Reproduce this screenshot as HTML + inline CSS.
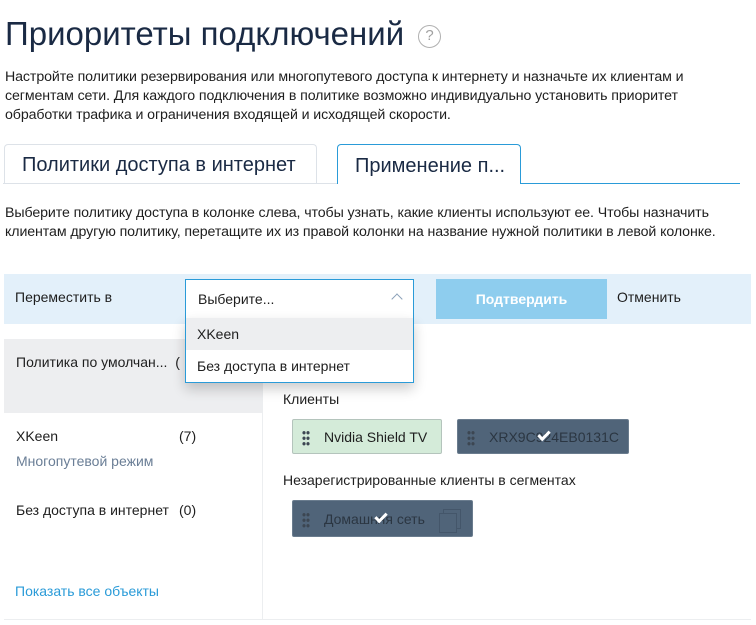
<!DOCTYPE html>
<html><head><meta charset="utf-8"><style>
*{margin:0;padding:0;box-sizing:border-box}
body{width:756px;height:625px;background:#fff;font-family:"Liberation Sans","DejaVu Sans",sans-serif;color:#1e1e1e;position:relative;overflow:hidden}
.a{position:absolute;white-space:nowrap}
.p{font-size:14.2px;line-height:19px;color:#1e1e1e;letter-spacing:-0.1px}
.chip{position:absolute;height:35px;border-radius:2px;font-size:14px;line-height:35px}
.dots{position:absolute;left:9px;top:10px;width:8px;height:16px;background:radial-gradient(circle,#3c4652 1.5px,transparent 1.8px) 0 0/4px 5.5px}
.chk{position:absolute;width:12px;height:7px;border-left:3px solid #fff;border-bottom:3px solid #fff;transform:rotate(-45deg)}
</style></head><body>
<div class="a" style="left:5px;top:15px;font-size:33px;color:#1a2a44">Приоритеты подключений</div>
<div class="a" style="left:418px;top:25px;width:23px;height:23px;border:1.5px solid #b0b0b0;border-radius:50%;color:#a0a0a0;font-size:15px;text-align:center;line-height:20px">?</div>
<div class="a p" style="left:5px;top:68px">Настройте политики резервирования или многопутевого доступа к интернету и назначьте их клиентам и<br>сегментам сети. Для каждого подключения в политике возможно индивидуально установить приоритет<br>обработки трафика и ограничения входящей и исходящей скорости.</div>
<div class="a" style="left:4px;top:144px;width:313px;height:40px;border:1px solid #dde2e8;border-bottom:none;border-radius:4px 4px 0 0;font-size:20px;color:#1a2a44;line-height:40px;padding-left:17px">Политики доступа в интернет</div>
<div class="a" style="left:3px;top:183px;width:335px;height:1px;background:#dde2e8"></div>
<div class="a" style="left:337px;top:144px;width:184px;height:40px;border:1px solid #2a9bd8;border-bottom:none;border-radius:4px 4px 0 0;background:#fff;font-size:20px;color:#1a2a44;line-height:42px;padding-left:17px">Применение п...</div>
<div class="a" style="left:520px;top:183px;width:220px;height:1px;background:#2a9bd8"></div>
<div class="a p" style="left:5px;top:204px">Выберите политику доступа в колонке слева, чтобы узнать, какие клиенты используют ее. Чтобы назначить<br>клиентам другую политику, перетащите их из правой колонки на название нужной политики в левой колонке.</div>
<div class="a" style="left:4px;top:274px;width:747px;height:50px;background:#e3f0fa"></div>
<div class="a" style="left:15px;top:289px;font-size:14px">Переместить в</div>
<div class="a" style="left:185px;top:279px;width:229px;height:40px;border:1px solid #2a9bd8;background:#fff;font-size:14px;line-height:38px;padding-left:12px">Выберите...</div>
<div class="a" style="left:393px;top:295px;width:8px;height:8px;border-left:1.5px solid #8aa0b8;border-top:1.5px solid #8aa0b8;transform:rotate(45deg)"></div>
<div class="a" style="left:436px;top:279px;width:171px;height:40px;background:#8ecdee;color:#fff;font-size:14px;font-weight:bold;text-align:center;line-height:40px">Подтвердить</div>
<div class="a" style="left:617px;top:289px;font-size:14px">Отменить</div>
<div class="a" style="left:4px;top:339px;width:258px;height:74px;background:#edeef0"></div>
<div class="a" style="left:16px;top:354px;font-size:14px">Политика по умолчан...&nbsp;&nbsp;(</div>
<div class="a" style="left:262px;top:324px;width:1px;height:296px;background:#eceef0"></div>
<div class="a" style="left:4px;top:619px;width:747px;height:1px;background:#eceef0"></div>
<div class="a" style="left:16px;top:428px;font-size:14px">XKeen</div>
<div class="a" style="left:179px;top:428px;font-size:14px">(7)</div>
<div class="a" style="left:16px;top:453px;font-size:14px;color:#6a7e96">Многопутевой режим</div>
<div class="a" style="left:16px;top:502px;font-size:14px">Без доступа в интернет</div>
<div class="a" style="left:179px;top:502px;font-size:14px">(0)</div>
<div class="a" style="left:15px;top:583px;font-size:14px;color:#2a9bd8">Показать все объекты</div>
<div class="a" style="left:283px;top:391px;font-size:14px">Клиенты</div>
<div class="chip" style="left:292px;top:419px;width:150px;background:#d4ebd9;border:1px solid #b4c4bc"><div class="dots"></div><span style="position:absolute;left:31px">Nvidia Shield TV</span></div>
<div class="chip" style="left:457px;top:419px;width:172px;background:#506479;border:1px solid #6a7c8e;color:#2b3642"><div class="dots"></div><span style="position:absolute;left:31px">XRX9C924EB0131C</span><div class="chk" style="left:80px;top:11px"></div></div>
<div class="a" style="left:283px;top:472px;font-size:14px">Незарегистрированные клиенты в сегментах</div>
<div class="chip" style="left:292px;top:500px;width:181px;height:37px;background:#506479;border:1px solid #6a7c8e;color:#2b3642;line-height:37px"><div class="dots" style="top:11px"></div><span style="position:absolute;left:31px">Домашняя сеть</span><div class="chk" style="left:82px;top:12px"></div>
<div style="position:absolute;left:150px;top:8px;width:18px;height:20px;border:1.5px solid #44566a"></div><div style="position:absolute;left:146px;top:12px;width:18px;height:20px;border:1.5px solid #44566a;background:#506479"></div></div>
<div class="a" style="left:185px;top:318px;width:229px;height:65px;border:1px solid #2a9bd8;border-top:none;background:#fff;box-shadow:0 6px 12px rgba(0,0,0,.2)">
<div style="height:32px;background:#edeef0;font-size:14px;line-height:32px;padding-left:11px">XKeen</div>
<div style="height:32px;font-size:14px;line-height:32px;padding-left:11px">Без доступа в интернет</div></div>
</body></html>
